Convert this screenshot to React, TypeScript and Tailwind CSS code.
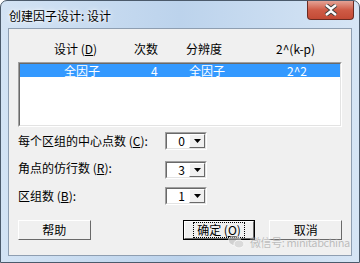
import React from 'react';

const font = { fontFamily: '"Noto Sans CJK SC", "Noto Sans", sans-serif' };

const Combo = ({ value }: { value: string }) => (
    <div className="w-[42px] h-[18px] flex bg-white border border-t-[#a0a0a0] border-l-[#a0a0a0] border-r-white border-b-white">
        <div className="flex-1 flex border border-t-[#696969] border-l-[#696969] border-r-[#e3e3e3] border-b-[#e3e3e3]">
            <div className="flex-1 text-right pr-[4px] text-[12px] leading-[14px]">{value}</div>
            <div className="w-[16px] bg-[#f0f0f0] border border-t-white border-l-white border-r-[#696969] border-b-[#696969] flex items-center justify-center">
                <svg width="7" height="4" viewBox="0 0 7 4"><path d="M0 0h7L3.5 4z" fill="#000" /></svg>
            </div>
        </div>
    </div>
);

const Btn = ({ children, focused, className }: { children: React.ReactNode; focused?: boolean; className?: string }) => (
    <button className={`h-[20px] w-[75px] bg-[#f0f0f0] border ${focused ? 'border-black' : 'border-t-white border-l-white border-r-[#696969] border-b-[#696969]'} text-[12px] leading-none flex items-center justify-center ${className || ''}`}>
        {focused ? (
            <span className="w-full h-full border border-t-white border-l-white border-r-[#696969] border-b-[#696969] flex items-center justify-center">
                <span className="px-[3px] py-[1px] border border-dotted border-black">{children}</span>
            </span>
        ) : children}
    </button>
);

export default function App() {
    return (
        <div className="w-[360px] h-[263px] bg-white" style={font}>
            <div className="relative w-[360px] h-[263px] rounded-t-[7px] border border-[#4b5a6b] bg-gradient-to-r from-[#d3e3f4] via-[#bcd3ec] to-[#d6e5f5] flex flex-col">
                {/* title bar */}
                <div className="h-[27px] flex items-start justify-between pl-[8px]">
                    <span className="mt-[8px] text-[12px] leading-[14px] text-black [text-shadow:0_0_6px_#fff,0_0_3px_#fff]">创建因子设计: 设计</span>
                    <div className="mr-[5px] w-[47px] h-[19px] rounded-b-[4px] border border-t-0 border-[#6b2b22] bg-gradient-to-b from-[#e3a295] via-[#cf5b46] to-[#c34a35] flex items-center justify-center">
                        <svg width="14" height="12" viewBox="0 0 14 12">
                            <path d="M2 1l5 4 5-4M2 11l5-4 5 4" stroke="#3c3c3c" strokeWidth="4.2" fill="none" />
                            <path d="M2 1l5 4 5-4M2 11l5-4 5 4" stroke="#fff" strokeWidth="2.4" fill="none" />
                        </svg>
                    </div>
                </div>
                {/* client */}
                <div className="mx-[7px] mb-[6px] flex-1 bg-[#f0f0f0] border border-[#8e9eb1] px-[9px] pt-[13px] flex flex-col">
                    <div className="h-[14px] flex text-[12px] leading-[14px] pl-[36px]">
                        <span className="w-[80px]">设计 (<u>D</u>)</span>
                        <span className="w-[52px]">次数</span>
                        <span className="w-[90px]">分辨度</span>
                        <span>2^(k-p)</span>
                    </div>
                    <div className="mt-[6px] h-[65px] bg-white border border-t-[#a0a0a0] border-l-[#a0a0a0] border-r-white border-b-white">
                        <div className="h-full border border-t-[#696969] border-l-[#696969] border-r-[#e3e3e3] border-b-[#e3e3e3]">
                            <div className="h-[13px] bg-[#3399ff] text-white flex text-[12px] leading-[13px] pl-[44px]">
                                <span className="w-[87px]">全因子</span>
                                <span className="w-[38px]">4</span>
                                <span className="w-[98px]">全因子</span>
                                <span>2^2</span>
                            </div>
                        </div>
                    </div>
                    <div className="mt-[5px] flex flex-col gap-[12px] text-[12px] leading-[14px]">
                        <div className="h-[18px] flex items-center">
                            <span className="w-[147px]">每个区组的中心点数 (<u>C</u>):</span>
                            <Combo value="0" />
                        </div>
                        <div className="h-[18px] flex items-center -mt-[1px]">
                            <span className="w-[147px] -mt-[4px]">角点的仿行数 (<u>R</u>):</span>
                            <Combo value="3" />
                        </div>
                        <div className="h-[18px] flex items-center -mt-[4px]">
                            <span className="w-[147px]">区组数 (<u>B</u>):</span>
                            <Combo value="1" />
                        </div>
                    </div>
                    <div className="mt-[15px] flex">
                        <Btn className="w-[74px]">帮助</Btn>
                        <Btn focused className="ml-[92px] w-[71px]">确定 (<u>O</u>)</Btn>
                        <Btn className="ml-[14px]">取消</Btn>
                    </div>
                </div>
                {/* watermark */}
                <div className="absolute left-[227px] top-[234px] flex items-center gap-[5px] opacity-60 pointer-events-none whitespace-nowrap">
                    <svg width="17" height="14" viewBox="0 0 17 14">
                        <ellipse cx="6.5" cy="5.5" rx="6" ry="5" fill="#bbb" stroke="#fff" strokeWidth="1" />
                        <ellipse cx="11" cy="9" rx="5" ry="4" fill="#ccc" stroke="#fff" strokeWidth="1" />
                    </svg>
                    <span className="text-[11px] leading-[14px] text-[#9a9a9a] tracking-[-0.4px] [text-shadow:0_0_1px_#fff]">微信号: minitabchina</span>
                </div>
            </div>
        </div>
    );
}
